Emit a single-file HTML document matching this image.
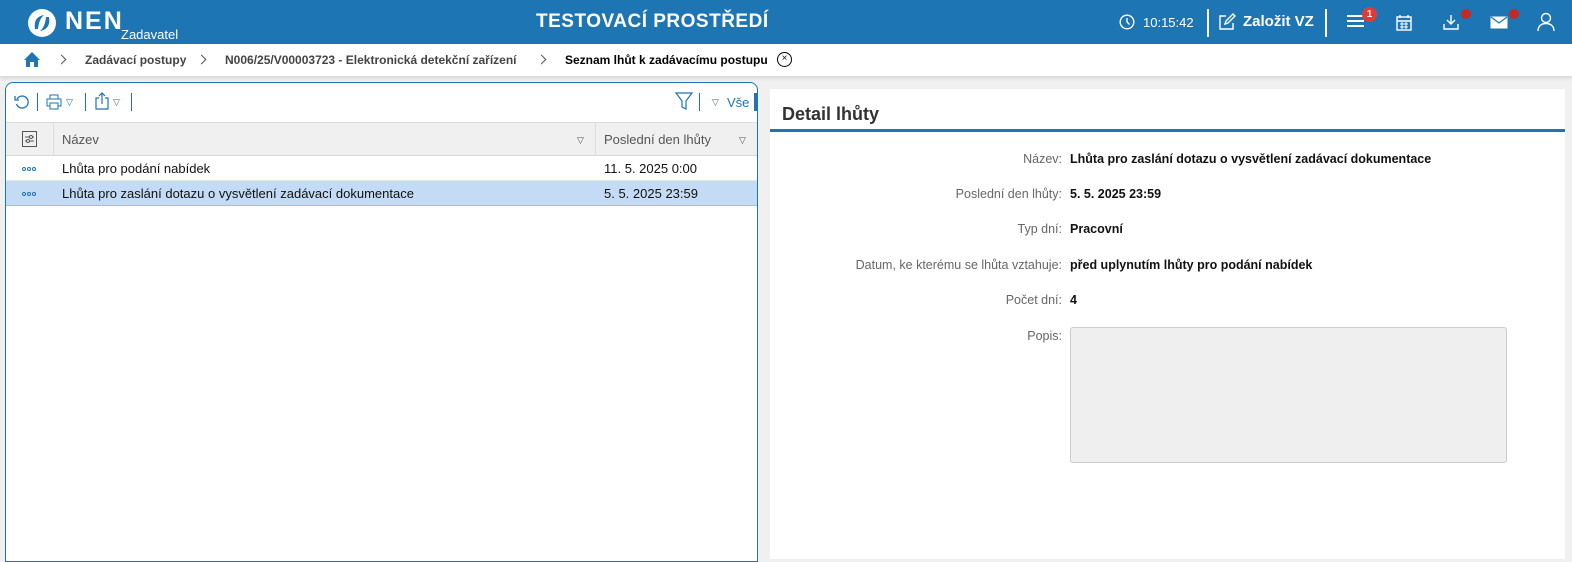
<!DOCTYPE html>
<html><head><meta charset="utf-8">
<style>
*{box-sizing:border-box;margin:0;padding:0}
body{width:1572px;height:550px;overflow:hidden;background:#f0f0f0;font-family:"Liberation Sans",sans-serif;font-size:13px;color:#111;position:relative}
.hdr{position:absolute;left:0;top:0;width:1572px;height:44px;background:#1e75b3;color:#fff}
.abs{position:absolute}
.bc{position:absolute;left:0;top:44px;width:1572px;height:32px;background:#fff;box-shadow:0 2px 4px rgba(0,0,0,.12)}
.bc span{position:absolute;top:9px;font-size:12px;color:#444;font-weight:bold}
.chev{position:absolute;top:12px;width:7px;height:7px;border-right:1.3px solid #555;border-top:1.3px solid #555;transform:rotate(45deg)}
.lp{position:absolute;left:5px;top:82px;width:753px;height:480px;background:#fff;border:1px solid #1e75b3;border-radius:8px 8px 0 0}
.rp{position:absolute;left:770px;top:89px;width:795px;height:470px;background:#fff}
.lbl{position:absolute;right:0;width:290px;text-align:right;color:#666;font-size:12.5px}
.val{position:absolute;left:300px;font-weight:bold;font-size:12.5px;color:#111}
.vs{position:absolute;width:1px;background:#1e75b3}
.tri{position:absolute;font-size:9px;color:#1e75b3}
.dots{position:absolute;left:16px;width:16px;height:5px}
.dots i{float:left;width:4px;height:4px;border:1px solid #1e75b3;border-radius:50%;margin-right:1px}
</style></head><body>
<div class="hdr">
  <svg class="abs" style="left:26px;top:7px" width="32" height="32" viewBox="0 0 32 32"><circle cx="16" cy="16" r="14" fill="#fff"/><path d="M9 22 Q7 10 18 8 Q13 12 12 22 Z" fill="#1e75b3"/><path d="M23 10 Q25 22 14 24 Q19 20 20 10 Z" fill="#1e75b3"/></svg>
  <div class="abs" style="left:65px;top:7px;font-size:25px;font-weight:bold;letter-spacing:2px">NEN</div>
  <div class="abs" style="left:121px;top:27px;font-size:13px">Zadavatel</div>
  <div class="abs" style="left:536px;top:11px;font-size:19px;font-weight:bold;letter-spacing:.5px">TESTOVACÍ PROSTŘEDÍ</div>
  <svg class="abs" style="left:1119px;top:14px" width="16" height="16" viewBox="0 0 16 16"><circle cx="8" cy="8" r="6.8" fill="none" stroke="#fff" stroke-width="1.4"/><path d="M8 4v4l2.5 2.5" fill="none" stroke="#fff" stroke-width="1.4"/></svg>
  <div class="abs" style="left:1143px;top:15px;font-size:13px">10:15:42</div>
  <div class="abs" style="left:1207px;top:9px;width:2px;height:28px;background:#fff"></div>
  <svg class="abs" style="left:1218px;top:13px" width="18" height="18" viewBox="0 0 18 18"><path d="M8 3H2v13h13v-6" fill="none" stroke="#fff" stroke-width="1.4"/><path d="M7 11l1-3 7-7 2 2-7 7z" fill="none" stroke="#fff" stroke-width="1.4"/></svg>
  <div class="abs" style="left:1243px;top:13px;font-size:15px;font-weight:bold">Založit VZ</div>
  <div class="abs" style="left:1325px;top:9px;width:2px;height:28px;background:#fff"></div>
  <div class="abs" style="left:1347px;top:15px;width:17px;height:2px;background:#fff;box-shadow:0 5px 0 #fff,0 10px 0 #fff"></div>
  <div class="abs" style="left:1362px;top:7px;width:15px;height:15px;border-radius:50%;background:#e53935;font-size:10px;text-align:center;line-height:15px;font-weight:bold">1</div>
  <svg class="abs" style="left:1396px;top:14px" width="16" height="17" viewBox="0 0 16 17"><rect x="1" y="3" width="14" height="13" fill="none" stroke="#fff" stroke-width="1.4"/><path d="M4 1v3M12 1v3M1 7h14" stroke="#fff" stroke-width="1.4"/><path d="M4 10h8M4 13h8M6 8v7M10 8v7" stroke="#fff" stroke-width="1"/></svg>
  <svg class="abs" style="left:1442px;top:14px" width="18" height="17" viewBox="0 0 18 17"><path d="M9 1v9M5 6l4 4 4-4" fill="none" stroke="#fff" stroke-width="1.4"/><path d="M2 10v5h14v-5" fill="none" stroke="#fff" stroke-width="1.4"/></svg>
  <div class="abs" style="left:1461px;top:9px;width:10px;height:10px;border-radius:50%;background:#c62828"></div>
  <svg class="abs" style="left:1490px;top:16px" width="18" height="13" viewBox="0 0 18 13"><rect x="0.5" y="0.5" width="17" height="12" fill="#fff"/><path d="M1 1l8 6 8-6" fill="none" stroke="#1e75b3" stroke-width="1.2"/></svg>
  <div class="abs" style="left:1509px;top:9px;width:10px;height:10px;border-radius:50%;background:#c62828"></div>
  <svg class="abs" style="left:1537px;top:12px" width="18" height="20" viewBox="0 0 18 20"><circle cx="9" cy="6" r="4.5" fill="none" stroke="#fff" stroke-width="1.4"/><path d="M1 19c0-5 3.5-7.5 8-7.5s8 2.5 8 7.5" fill="none" stroke="#fff" stroke-width="1.4"/></svg>
</div>
<div class="bc">
  <svg class="abs" style="left:23px;top:7px" width="18" height="17" viewBox="0 0 18 17"><path d="M9 1L1 9h2v7h4v-5h4v5h4V9h2z" fill="#1e75b3"/></svg>
  <div class="chev" style="left:58px"></div>
  <span style="left:85px">Zadávací postupy</span>
  <div class="chev" style="left:198px"></div>
  <span style="left:225px">N006/25/V00003723 - Elektronická detekční zařízení</span>
  <div class="chev" style="left:538px"></div>
  <span style="left:565px;color:#000">Seznam lhůt k zadávacímu postupu</span>
  <div class="abs" style="left:777px;top:8px;width:15px;height:15px;border:1.3px solid #000;border-radius:50%;font-size:10px;text-align:center;line-height:12px">×</div>
</div>
<div class="lp">
  <svg class="abs" style="left:8px;top:11px" width="16" height="16" viewBox="0 0 16 16"><path d="M3 5A6 6 0 1 1 2.5 10" fill="none" stroke="#1e75b3" stroke-width="1.3"/><path d="M1 2v4h4" fill="none" stroke="#1e75b3" stroke-width="1.3"/></svg>
  <div class="vs" style="left:31px;top:10px;height:18px"></div>
  <svg class="abs" style="left:40px;top:11px" width="16" height="16" viewBox="0 0 16 16"><rect x="4" y="1" width="8" height="4" fill="none" stroke="#1e75b3"/><rect x="1" y="5" width="14" height="7" fill="none" stroke="#1e75b3"/><rect x="4" y="9" width="8" height="6" fill="#fff" stroke="#1e75b3"/></svg>
  <div class="tri" style="left:60px;top:14px">▽</div>
  <div class="vs" style="left:79px;top:10px;height:18px"></div>
  <svg class="abs" style="left:88px;top:9px" width="16" height="18" viewBox="0 0 16 18"><path d="M5 6H2v11h12V6h-3M8 12V1M5 4l3-3 3 3" fill="none" stroke="#1e75b3" stroke-width="1.2"/></svg>
  <div class="tri" style="left:107px;top:14px">▽</div>
  <div class="vs" style="left:125px;top:10px;height:18px"></div>
  <svg class="abs" style="left:669px;top:9px" width="18" height="18" viewBox="0 0 18 18"><path d="M1 1h16l-6 8v8l-4-2V9z" fill="none" stroke="#1e75b3" stroke-width="1.2"/></svg>
  <div class="vs" style="left:693px;top:10px;height:18px"></div>
  <div class="tri" style="left:706px;top:14px">▽</div>
  <div class="abs" style="left:721px;top:12px;font-size:13px;color:#1e75b3">Vše</div>
  <div class="abs" style="left:748px;top:10px;width:3px;height:18px;background:#1e75b3"></div>
  <div class="abs" style="left:0;top:39px;width:751px;height:34px;background:#f0f0f0;border-top:1px solid #ddd;border-bottom:1px solid #d8d8d8"></div>
  <div class="abs" style="left:47px;top:40px;width:1px;height:32px;background:#ddd"></div>
  <div class="abs" style="left:589px;top:40px;width:1px;height:32px;background:#ddd"></div>
  <svg class="abs" style="left:16px;top:48px" width="15" height="16" viewBox="0 0 15 16"><rect x="0.5" y="0.5" width="14" height="15" fill="none" stroke="#555"/><path d="M3 6h9M3 10h9" stroke="#555"/><circle cx="9" cy="6" r="1.5" fill="#fff" stroke="#555"/><circle cx="6" cy="10" r="1.5" fill="#fff" stroke="#555"/></svg>
  <div class="abs" style="left:56px;top:49px;color:#555">Název</div>
  <div class="abs" style="left:571px;top:52px;font-size:9px;color:#555">▽</div>
  <div class="abs" style="left:598px;top:49px;color:#555">Poslední den lhůty</div>
  <div class="abs" style="left:733px;top:52px;font-size:9px;color:#555">▽</div>
  <div class="abs" style="left:0;top:73px;width:751px;height:25px;border-bottom:1px solid #e6e6e6"></div>
  <div class="dots" style="top:84px"><i></i><i></i><i></i></div>
  <div class="abs" style="left:56px;top:78px">Lhůta pro podání nabídek</div>
  <div class="abs" style="left:598px;top:78px">11. 5. 2025 0:00</div>
  <div class="abs" style="left:0;top:98px;width:751px;height:25px;background:#c3dbf4;border-bottom:1px solid #9fc1e6"></div>
  <div class="dots" style="top:109px"><i></i><i></i><i></i></div>
  <div class="abs" style="left:56px;top:103px">Lhůta pro zaslání dotazu o vysvětlení zadávací dokumentace</div>
  <div class="abs" style="left:598px;top:103px">5. 5. 2025 23:59</div>
</div>
<div class="rp">
  <div class="abs" style="left:12px;top:15px;font-size:18px;font-weight:bold;color:#333">Detail lhůty</div>
  <div class="abs" style="left:0;top:40px;width:795px;height:3px;background:#1e75b3"></div>
  <div style="position:absolute;left:0;top:0;width:1000px">
    <div class="lbl" style="left:0;width:292px;top:63px">Název:</div><div class="val" style="top:63px">Lhůta pro zaslání dotazu o vysvětlení zadávací dokumentace</div>
    <div class="lbl" style="left:0;width:292px;top:98px">Poslední den lhůty:</div><div class="val" style="top:98px">5. 5. 2025 23:59</div>
    <div class="lbl" style="left:0;width:292px;top:133px">Typ dní:</div><div class="val" style="top:133px">Pracovní</div>
    <div class="lbl" style="left:0;width:292px;top:169px">Datum, ke kterému se lhůta vztahuje:</div><div class="val" style="top:169px">před uplynutím lhůty pro podání nabídek</div>
    <div class="lbl" style="left:0;width:292px;top:204px">Počet dní:</div><div class="val" style="top:204px">4</div>
    <div class="lbl" style="left:0;width:292px;top:240px">Popis:</div>
    <div class="abs" style="left:300px;top:238px;width:437px;height:136px;background:#efefef;border:1px solid #ccc;border-radius:3px"></div>
  </div>
</div>
</body></html>
